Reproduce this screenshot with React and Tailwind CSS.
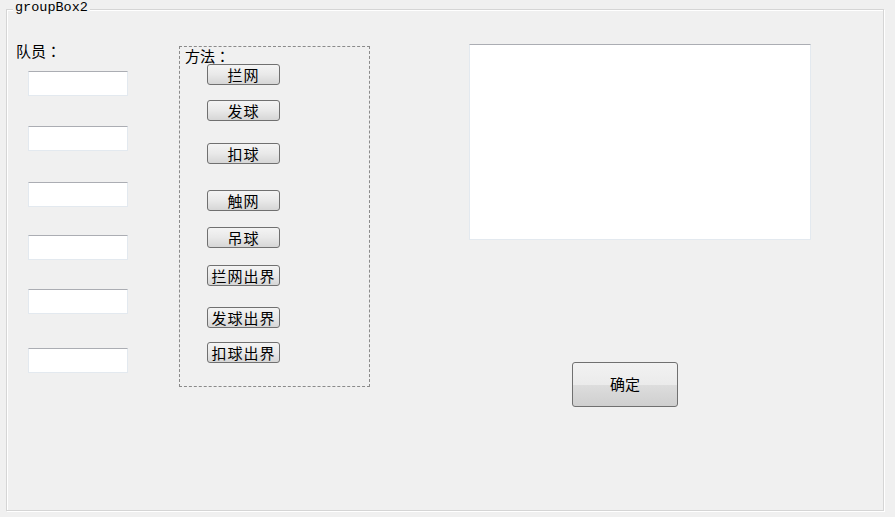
const cjk = { fontFamily: '"Noto Sans CJK JP", "Noto Sans CJK SC", "Noto Sans", sans-serif' };

const TextBox = ({ className = "" }) => (
  <div
    className={`w-[100px] h-[25px] bg-white border border-[#e3e9ef] border-t-[#abadb3] ${className}`}
  />
);

const MethodButton = ({ label, className = "" }) => (
  <button
    className={`w-[73px] h-[21px] flex items-center justify-center rounded-[3px] border border-[#707070] bg-gradient-to-b from-[#f4f4f4] via-[#e9e9e9] to-[#d6d6d6] text-[15px] tracking-[1px] leading-none text-black ${className}`}
    style={cjk}
  >
    {label}
  </button>
);

const methods = [
  { label: "拦网", mt: "mt-0" },
  { label: "发球", mt: "mt-[15px]" },
  { label: "扣球", mt: "mt-[22px]" },
  { label: "触网", mt: "mt-[26px]" },
  { label: "吊球", mt: "mt-[16px]" },
  { label: "拦网出界", mt: "mt-[17px]" },
  { label: "发球出界", mt: "mt-[21px]" },
  { label: "扣球出界", mt: "mt-[14px]" },
];

export default function App() {
  return (
    <div className="w-[895px] h-[517px] bg-[#f0f0f0] overflow-hidden pt-[9px] pl-[6px]">
      <div className="relative w-[878px] h-[502px] border border-[#d5d5d5] shadow-[inset_1px_1px_0_#ffffff,1px_1px_0_#ffffff]">
        <span
          className="absolute left-[6px] -top-[10px] px-[2px] bg-[#f0f0f0] text-[13.5px] leading-[16px] text-black"
          style={{ fontFamily: '"Liberation Mono", monospace' }}
        >
          groupBox2
        </span>

        <div className="flex pl-[9px]">
          {/* 队员 */}
          <div className="w-[163px] flex flex-col pt-[32px]">
            <div className="text-[15px] leading-[18px] text-black" style={cjk}>
              队员：
            </div>
            <TextBox className="ml-3 mt-[11px]" />
            <TextBox className="ml-3 mt-[30px]" />
            <TextBox className="ml-3 mt-[31px]" />
            <TextBox className="ml-3 mt-[28px]" />
            <TextBox className="ml-3 mt-[29px]" />
            <TextBox className="ml-3 mt-[34px]" />
          </div>

          {/* 方法 */}
          <div className="mt-[36px] w-[191px] h-[341px] border border-dashed border-[#8a8a8a] pl-[5px] flex flex-col">
            <div className="text-[15px] leading-[17px] text-black" style={cjk}>
              方法：
            </div>
            {methods.map((m) => (
              <MethodButton key={m.label} label={m.label} className={`ml-[22px] ${m.mt}`} />
            ))}
          </div>

          {/* 右侧 */}
          <div className="ml-[99px] flex flex-col pt-[34px]">
            <div className="w-[342px] h-[196px] bg-white border border-[#e3e9ef] border-t-[#abadb3]" />
            <button
              className="ml-[103px] mt-[122px] w-[106px] h-[45px] flex items-center justify-center rounded-[3px] border border-[#707070] bg-[linear-gradient(to_bottom,#f2f2f2_0%,#ebebeb_50%,#dddddd_51%,#cfcfcf_100%)] text-[15px] text-black"
              style={cjk}
            >
              确定
            </button>
          </div>
        </div>
      </div>
    </div>
  );
}
